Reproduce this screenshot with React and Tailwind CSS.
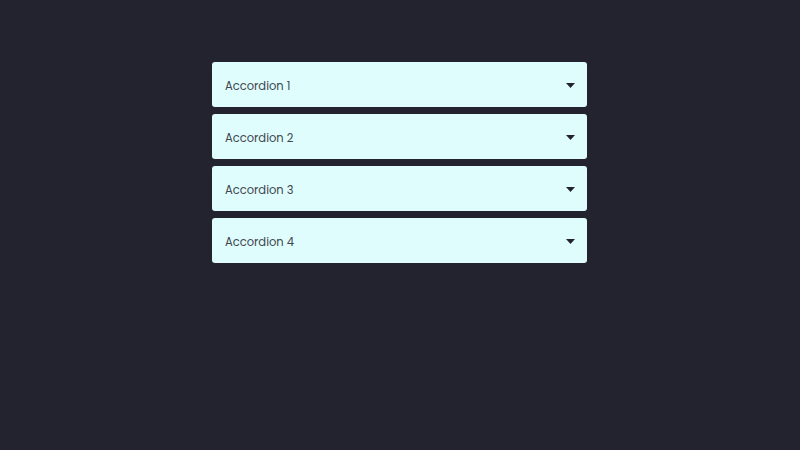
export default function App() {
  const items = ["Accordion 1", "Accordion 2", "Accordion 3", "Accordion 4"];
  return (
    <div className="w-[800px] h-[450px] bg-[#23232f] flex" style={{ fontFamily: "Poppins, 'Open Sans', sans-serif" }}>
      <div className="w-[375px] ml-[212px] mt-[62px] flex flex-col gap-[7px]">
        {items.map((t) => (
          <div key={t} className="h-[45px] bg-[#e0fdfd] rounded-[3px] flex items-center justify-between pl-[13px] pr-[12px]">
            <span className="text-[11.5px] text-[#3e474d] mt-[4px]">{t}</span>
            <svg width="9" height="5" viewBox="0 0 9 5" className="mt-[2px]">
              <path d="M0 0 L9 0 L4.5 5 Z" fill="#23232f" />
            </svg>
          </div>
        ))}
      </div>
    </div>
  );
}
